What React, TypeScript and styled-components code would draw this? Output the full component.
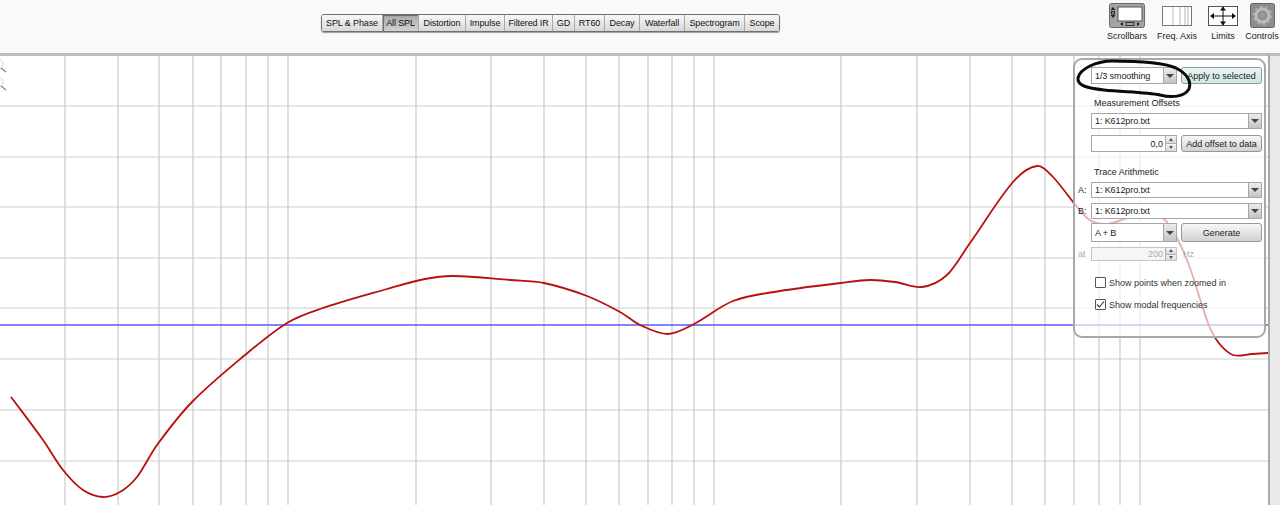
import { FC } from 'react';
import styled, { createGlobalStyle } from 'styled-components';

const GlobalStyle = createGlobalStyle`
    html, body {
        margin: 0;
        padding: 0;
        background: #fff;
    }

    body {
        font-family: 'Liberation Sans', Arial, sans-serif;
        color: #222;
    }
`;

const TABS = [
    { label: 'SPL & Phase', width: 61 },
    { label: 'All SPL', width: 36, active: true },
    { label: 'Distortion', width: 47 },
    { label: 'Impulse', width: 39 },
    { label: 'Filtered IR', width: 48 },
    { label: 'GD', width: 22 },
    { label: 'RT60', width: 30 },
    { label: 'Decay', width: 35 },
    { label: 'Waterfall', width: 45 },
    { label: 'Spectrogram', width: 60 },
    { label: 'Scope', width: 34 },
];

const V_LINES = [
    65, 118, 159, 193, 221, 246, 268, 288, 416, 491, 544, 586, 619, 648, 672, 694, 714, 841, 917,
    970, 1012, 1045, 1074, 1099, 1120, 1140,
];
const H_LINES = [106, 157, 207, 258, 308, 359, 410, 461];

const CURVE: [number, number][] = [
    [11, 397], [43, 440], [63, 470], [83, 490], [103, 497], [120, 492], [137, 477], [157, 445],
    [192, 402], [245, 355], [287, 323], [320, 309], [387, 289], [425, 279], [453, 276], [510, 280],
    [544, 283], [587, 296], [620, 312], [640, 325], [668, 334], [694, 324], [733, 301], [780, 291],
    [841, 283], [870, 280], [895, 282], [922, 287], [947, 275], [970, 243], [1013, 182],
    [1037, 166], [1053, 177], [1087, 218], [1105, 224], [1125, 219], [1148, 212], [1165, 220],
    [1178, 240], [1190, 268], [1208, 323], [1218, 342], [1233, 355], [1252, 354], [1268, 353],
];

// x only ever grows here, so tangents are plain slopes and uneven spacing stays smooth
const smoothPath = (pts: [number, number][]) => {
    const slope = (i: number) => {
        const a = pts[Math.max(i - 1, 0)];
        const b = pts[Math.min(i + 1, pts.length - 1)];
        return (b[1] - a[1]) / (b[0] - a[0]);
    };
    let d = `M${pts[0][0]} ${pts[0][1]}`;
    for (let i = 0; i < pts.length - 1; i++) {
        const [x1, y1] = pts[i];
        const [x2, y2] = pts[i + 1];
        const h = (x2 - x1) / 3;
        const c1 = `${(x1 + h).toFixed(1)} ${(y1 + slope(i) * h).toFixed(1)}`;
        const c2 = `${(x2 - h).toFixed(1)} ${(y2 - slope(i + 1) * h).toFixed(1)}`;
        d += `C${c1} ${c2} ${x2} ${y2}`;
    }
    return d;
};

const Page = styled.div`
    position: relative;
    width: 1280px;
    height: 505px;
    overflow: hidden;
    display: flex;
    flex-direction: column;
    background: #fff;
`;

const Toolbar = styled.header`
    height: 53px;
    flex: none;
    display: flex;
    align-items: flex-start;
    padding-left: 321px;
    box-sizing: border-box;
    background: #f9f9f9;
`;

const TabBar = styled.nav`
    display: flex;
    margin-top: 14px;
    height: 18px;
    box-sizing: border-box;
    border: 1px solid #6f6f6f;
    border-radius: 3px;
    box-shadow: 0 1px 1px #999;
    overflow: hidden;
`;

const Tab = styled.div<{ $width: number; $active?: boolean }>`
    width: ${({ $width }) => $width}px;
    box-sizing: border-box;
    display: flex;
    align-items: center;
    justify-content: center;
    font-size: 9px;
    letter-spacing: -0.12px;
    color: #111;
    white-space: nowrap;
    border-right: 1px solid #a8a8a8;
    background: ${({ $active }) =>
        $active ? 'linear-gradient(#a9a9a9, #d2d2d2)' : 'linear-gradient(#f8f8f8, #d8d8d8)'};
    box-shadow: ${({ $active }) => ($active ? 'inset 1px 1px 1px #666' : 'none')};

    &:last-child {
        border-right: 0;
    }
`;

const ToolIcons = styled.div`
    margin-left: auto;
    display: flex;
    padding-top: 3px;
`;

const ToolItem = styled.div<{ $width: number }>`
    width: ${({ $width }) => $width}px;
    display: flex;
    flex-direction: column;
    align-items: center;
    font-size: 9px;
    color: #222;
    white-space: nowrap;
`;

const ToolGlyph = styled.div`
    height: 25px;
    margin-bottom: 3px;
    display: flex;
    align-items: center;
`;

const PlotRow = styled.main`
    flex: 1;
    display: flex;
    min-height: 0;
`;

const Plot = styled.div`
    width: 1268px;
    flex: none;
    border-top: 3px solid #bdbdbd;
`;

const PlotSvg = styled.svg`
    display: block;
`;

const Gutter = styled.div`
    flex: 1;
    border-left: 2px solid #a9a9a9;
    border-top: 3px solid #bdbdbd;
    background: #e9e9e9;
`;

const ControlsPanel = styled.aside`
    position: absolute;
    left: 1073px;
    top: 58px;
    width: 193px;
    height: 280px;
    box-sizing: border-box;
    padding: 7px 3px 0;
    border: 2px solid #a8a8a8;
    border-radius: 9px;
    background: rgba(255, 255, 255, 0.66);
    display: flex;
    flex-direction: column;
    font-size: 9px;
`;

const Row = styled.div<{ $top?: number; $height: number }>`
    display: flex;
    align-items: center;
    height: ${({ $height }) => $height}px;
    margin-top: ${({ $top = 0 }) => $top}px;
`;

const SideLabel = styled.span<{ $muted?: boolean }>`
    width: 13px;
    flex: none;
    font-size: 9px;
    color: ${({ $muted }) => ($muted ? '#aaa' : '#222')};
`;

const GroupLabel = styled.div<{ $top: number }>`
    margin: ${({ $top }) => $top}px 0 0 16px;
    height: 12px;
    line-height: 12px;
    font-size: 9px;
    color: #222;
`;

const Select = styled.div<{ $width: number }>`
    width: ${({ $width }) => $width}px;
    height: 100%;
    flex: none;
    box-sizing: border-box;
    display: flex;
    align-items: center;
    justify-content: space-between;
    padding-left: 3px;
    background: #fff;
    border: 1px solid #a6a6a6;
    font-size: 9px;
    letter-spacing: -0.1px;
    color: #222;
`;

const SelectArrow = styled.span`
    width: 12px;
    height: 100%;
    flex: none;
    display: flex;
    align-items: center;
    justify-content: center;
    background: linear-gradient(#ececec, #c4c4c4);
    border-left: 1px solid #a6a6a6;

    &::after {
        content: '';
        border-left: 4px solid transparent;
        border-right: 4px solid transparent;
        border-top: 4px solid #444;
    }
`;

const ActionButton = styled.div<{ $tint?: boolean }>`
    width: 81px;
    height: 100%;
    margin-left: 4px;
    flex: none;
    box-sizing: border-box;
    display: flex;
    align-items: center;
    justify-content: center;
    border: 1px solid #8f9a9a;
    border-radius: 3px;
    font-size: 9px;
    color: #222;
    white-space: nowrap;
    background: ${({ $tint }) =>
        $tint ? 'linear-gradient(#e9f6f4, #cfe6e3)' : 'linear-gradient(#f8f8f8, #d2d2d2)'};
`;

const NumberField = styled.div<{ $disabled?: boolean }>`
    width: 86px;
    height: 100%;
    flex: none;
    box-sizing: border-box;
    display: flex;
    align-items: center;
    justify-content: flex-end;
    background: ${({ $disabled }) => ($disabled ? '#f6f6f6' : '#fff')};
    border: 1px solid ${({ $disabled }) => ($disabled ? '#c4c4c4' : '#a6a6a6')};
    color: ${({ $disabled }) => ($disabled ? '#aaa' : '#222')};
    font-size: 9px;
`;

const Spinner = styled.span`
    width: 10px;
    height: 100%;
    margin-left: 2px;
    flex: none;
    display: flex;
    flex-direction: column;
    border-left: 1px solid #b0b0b0;
`;

const SpinnerPart = styled.span<{ $down?: boolean }>`
    flex: 1;
    display: flex;
    align-items: center;
    justify-content: center;
    background: linear-gradient(#f4f4f4, #d8d8d8);
    border-top: ${({ $down }) => ($down ? '1px solid #b0b0b0' : '0')};

    &::after {
        content: '';
        border-left: 2.5px solid transparent;
        border-right: 2.5px solid transparent;
        ${({ $down }) =>
            $down ? 'border-top: 3px solid #555;' : 'border-bottom: 3px solid #555;'}
    }
`;

const UnitLabel = styled.span`
    margin-left: 6px;
    color: #aaa;
    font-size: 9px;
`;

const CheckRow = styled.div<{ $top: number }>`
    display: flex;
    align-items: center;
    height: 11px;
    margin: ${({ $top }) => $top}px 0 0 17px;
    font-size: 9px;
    color: #333;
    white-space: nowrap;
`;

const CheckBox = styled.span`
    width: 11px;
    height: 11px;
    margin-right: 3px;
    flex: none;
    box-sizing: border-box;
    border: 1px solid #555;
    border-radius: 1px;
    background: #fff;
    display: flex;
    align-items: center;
    justify-content: center;
`;

const ScribbleSvg = styled.svg`
    position: absolute;
    left: 1070px;
    top: 55px;
    pointer-events: none;
`;

const ScrollbarsIcon: FC = () => (
    <svg width='36' height='25' viewBox='0 0 36 25'>
        <rect x='0.5' y='0.5' width='35' height='24' rx='2' fill='#a3a3a3' stroke='#6a6a6a' />
        <rect x='9' y='4' width='24' height='14' fill='#fff' stroke='#555' />
        <path d='M4 4l2.5 3h-5zM4 15l2.5-3h-5z' fill='#222' />
        <rect x='2.5' y='8.5' width='3' height='2.5' fill='none' stroke='#222' />
        <path d='M11 21l3-2v4zM31 21l-3-2v4z' fill='#222' />
        <rect x='17' y='19.5' width='8' height='3' fill='none' stroke='#333' />
    </svg>
);

const FreqAxisIcon: FC = () => (
    <svg width='30' height='20' viewBox='0 0 30 20'>
        <rect x='0.5' y='0.5' width='29' height='19' fill='#fff' stroke='#777' />
        <path d='M11 1v18M18 1v18M23 1v18M26 1v18' stroke='#bbb' fill='none' />
    </svg>
);

const LimitsIcon: FC = () => (
    <svg width='30' height='20' viewBox='0 0 30 20'>
        <rect x='0.5' y='0.5' width='29' height='19' fill='#fff' stroke='#555' />
        <path d='M3 10h24M15 1v18' stroke='#111' strokeWidth='1' fill='none' />
        <path d='M2 10l4-3v6zM28 10l-4-3v6zM15 0.5l-3 4h6zM15 19.5l-3-4h6z' fill='#111' />
    </svg>
);

const ControlsIcon: FC = () => (
    <svg width='25' height='25' viewBox='0 0 25 25'>
        <rect x='0.5' y='0.5' width='24' height='24' rx='2' fill='#8c8c8c' stroke='#666' />
        <circle cx='12.5' cy='12.5' r='6.5' fill='none' stroke='#bdbdbd' strokeWidth='3' />
        <circle
            cx='12.5'
            cy='12.5'
            r='8.5'
            fill='none'
            stroke='#b0b0b0'
            strokeWidth='2.5'
            strokeDasharray='2.6 2.7'
        />
        <circle cx='12.5' cy='12.5' r='3' fill='#9a9a9a' />
    </svg>
);

const DropDown: FC<{ width: number; value: string }> = ({ width, value }) => (
    <Select $width={width}>
        {value}
        <SelectArrow />
    </Select>
);

const Spin: FC = () => (
    <Spinner>
        <SpinnerPart />
        <SpinnerPart $down />
    </Spinner>
);

const App: FC = () => (
    <Page>
        <GlobalStyle />
        <Toolbar>
            <TabBar>
                {TABS.map(tab => (
                    <Tab key={tab.label} $width={tab.width} $active={tab.active}>
                        {tab.label}
                    </Tab>
                ))}
            </TabBar>
            <ToolIcons>
                <ToolItem $width={50}>
                    <ToolGlyph>
                        <ScrollbarsIcon />
                    </ToolGlyph>
                    Scrollbars
                </ToolItem>
                <ToolItem $width={50}>
                    <ToolGlyph>
                        <FreqAxisIcon />
                    </ToolGlyph>
                    Freq. Axis
                </ToolItem>
                <ToolItem $width={42}>
                    <ToolGlyph>
                        <LimitsIcon />
                    </ToolGlyph>
                    Limits
                </ToolItem>
                <ToolItem $width={36}>
                    <ToolGlyph>
                        <ControlsIcon />
                    </ToolGlyph>
                    Controls
                </ToolItem>
            </ToolIcons>
        </Toolbar>
        <PlotRow>
            <Plot>
                <PlotSvg width='1268' height='449' viewBox='0 56 1268 449'>
                    {H_LINES.map(y => (
                        <line key={y} x1='0' x2='1268' y1={y} y2={y} stroke='#cdcdcd' strokeWidth='1.2' />
                    ))}
                    {V_LINES.map(x => (
                        <line key={x} x1={x} x2={x} y1='56' y2='505' stroke='#c9c9c9' strokeWidth='1.2' />
                    ))}
                    <line x1='0' x2='1268' y1='325' y2='325' stroke='#5a5af5' strokeWidth='1.4' />
                    <path d={smoothPath(CURVE)} fill='none' stroke='#b80f0f' strokeWidth='1.8' />
                    <g fill='none'>
                        <circle cx='-2' cy='64' r='5' stroke='#d8d8d8' />
                        <path d='M1 68l5 4' stroke='#888' strokeWidth='1.5' />
                        <circle cx='-2' cy='82' r='5' stroke='#d8d8d8' />
                        <path d='M1 86l5 4' stroke='#888' strokeWidth='1.5' />
                    </g>
                </PlotSvg>
            </Plot>
            <Gutter />
        </PlotRow>
        <ControlsPanel>
            <Row $height={17}>
                <SideLabel />
                <DropDown width={86} value='1/3 smoothing' />
                <ActionButton $tint>Apply to selected</ActionButton>
            </Row>
            <GroupLabel $top={13}>Measurement Offsets</GroupLabel>
            <Row $top={4} $height={16}>
                <SideLabel />
                <DropDown width={171} value='1: K612pro.txt' />
            </Row>
            <Row $top={6} $height={17}>
                <SideLabel />
                <NumberField>
                    0,0
                    <Spin />
                </NumberField>
                <ActionButton>Add offset to data</ActionButton>
            </Row>
            <GroupLabel $top={14}>Trace Arithmetic</GroupLabel>
            <Row $top={4} $height={16}>
                <SideLabel>A:</SideLabel>
                <DropDown width={171} value='1: K612pro.txt' />
            </Row>
            <Row $top={5} $height={16}>
                <SideLabel>B:</SideLabel>
                <DropDown width={171} value='1: K612pro.txt' />
            </Row>
            <Row $top={4} $height={19}>
                <SideLabel />
                <DropDown width={86} value='A + B' />
                <ActionButton>Generate</ActionButton>
            </Row>
            <Row $top={5} $height={14}>
                <SideLabel $muted>at</SideLabel>
                <NumberField $disabled>
                    200
                    <Spin />
                </NumberField>
                <UnitLabel>Hz</UnitLabel>
            </Row>
            <CheckRow $top={16}>
                <CheckBox />
                Show points when zoomed in
            </CheckRow>
            <CheckRow $top={11}>
                <CheckBox>
                    <svg width='9' height='9' viewBox='0 0 9 9'>
                        <path d='M1 4.5l2.5 2.5L8 1.5' fill='none' stroke='#333' strokeWidth='1.1' />
                    </svg>
                </CheckBox>
                Show modal frequencies
            </CheckRow>
        </ControlsPanel>
        <ScribbleSvg width='130' height='50' viewBox='1070 55 130 50'>
            <path
                d='M1112 61C1098 61 1080 68 1078 78C1077 86 1088 88 1104 90C1122 92 1146 92 1160 95C1172 98 1184 97 1189 89C1192 81 1186 73 1176 68C1162 62 1134 61 1112 61Z'
                fill='none'
                stroke='#0a0a0a'
                strokeWidth='3'
            />
        </ScribbleSvg>
    </Page>
);

export default App;
